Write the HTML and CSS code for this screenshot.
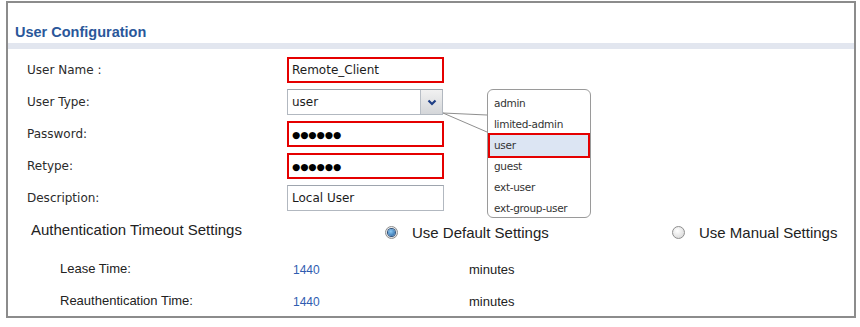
FILE: index.html
```html
<!DOCTYPE html>
<html lang="en">
<head>
    <meta charset="UTF-8">
    <title>User Configuration</title>
    <link rel="stylesheet" href="styles.css">
</head>
<body>

<div class="panel">
    <div class="title">User Configuration</div>
    <div class="band"></div>

    <div class="form">
        <div class="row">
            <div class="label">User Name :</div>
            <div class="field marked">Remote_Client</div>
        </div>

        <div class="row">
            <div class="label">User Type:</div>
            <div class="select-wrap">
                <div class="field select">
                    <span>user</span>
                    <span class="arrow">
                        <svg width="10" height="7" viewBox="0 0 10 7">
                            <polyline points="1.5,1.5 5,5 8.5,1.5" fill="none" stroke="#1f3f86" stroke-width="2.2"/>
                        </svg>
                    </span>
                </div>
                <svg class="pointer" width="48" height="24" viewBox="0 0 48 24">
                    <polyline points="45,3 1,1 45,20" fill="none" stroke="#8f8f8f" stroke-width="1"/>
                </svg>
                <ul class="menu">
                    <li>admin</li>
                    <li>limited-admin</li>
                    <li class="picked">user</li>
                    <li>guest</li>
                    <li>ext-user</li>
                    <li>ext-group-user</li>
                </ul>
            </div>
        </div>

        <div class="row">
            <div class="label">Password:</div>
            <div class="field marked dots">●●●●●●</div>
        </div>

        <div class="row">
            <div class="label">Retype:</div>
            <div class="field marked dots">●●●●●●</div>
        </div>

        <div class="row">
            <div class="label">Description:</div>
            <div class="field">Local User</div>
        </div>
    </div>

    <div class="auth">
        <div class="auth-label">Authentication Timeout Settings</div>
        <div class="choice first">
            <span class="radio on"></span>
            <span>Use Default Settings</span>
        </div>
        <div class="choice">
            <span class="radio"></span>
            <span>Use Manual Settings</span>
        </div>
    </div>

    <div class="times">
        <div class="time-row">
            <div class="time-label">Lease Time:</div>
            <div class="time-value">1440</div>
            <div class="time-unit">minutes</div>
        </div>
        <div class="time-row">
            <div class="time-label">Reauthentication Time:</div>
            <div class="time-value">1440</div>
            <div class="time-unit">minutes</div>
        </div>
    </div>
</div>

</body>
</html>
```

FILE: styles.css
```css
body {
    margin: 0;
    background-color: #fff;
    font-family: "DejaVu Sans", sans-serif;
    color: #2b2b2b;
}
.panel {
    box-sizing: border-box;
    width: 850px;
    height: 317px;
    margin: 1px 0 0 6px;
    border: 2px solid #8c8c8c;
}
.title {
    box-sizing: border-box;
    height: 40px;
    padding: 21px 0 0 7px;
    font-family: "Liberation Sans", Arial, sans-serif;
    font-size: 14.5px;
    line-height: 17px;
    font-weight: bold;
    color: #2a579a;
}
.band {
    height: 6px;
    background-color: #e2e6ef;
}
.form {
    margin-top: 8px;
}
.row {
    display: flex;
    align-items: center;
    height: 26px;
    margin-bottom: 6px;
}
.label {
    box-sizing: border-box;
    width: 279px;
    padding-left: 19px;
    font-size: 12px;
}
.field {
    box-sizing: border-box;
    display: flex;
    align-items: center;
    width: 157px;
    height: 26px;
    padding-left: 4px;
    border: 1px solid #b2b8c0;
    border-top-color: #9ea5ae;
    font-size: 12px;
    color: #1c1c1c;
    background-color: #fff;
}
.field.marked {
    border: 2px solid #e50000;
    padding-left: 3px;
}
.field.dots {
    font-size: 9.4px;
    letter-spacing: 0;
    color: #000;
}
.select-wrap {
    position: relative;
}
.field.select {
    width: 156px;
    padding-right: 0;
    justify-content: space-between;
}
.arrow {
    display: flex;
    align-items: center;
    justify-content: center;
    width: 21px;
    height: 24px;
    border-left: 1px solid #b8bec6;
    background: linear-gradient(#f1f1f1, #d4d6d9);
}
.pointer {
    position: absolute;
    left: 155px;
    top: 23px;
}
.menu {
    position: absolute;
    left: 200px;
    top: 0;
    width: 104px;
    height: 129px;
    box-sizing: border-box;
    margin: 0;
    padding: 3px 0 0;
    list-style: none;
    border: 1px solid #9a9a9a;
    border-radius: 6px;
    background-color: #fff;
    font-size: 10.5px;
    color: #333;
}
.menu li {
    height: 21px;
    line-height: 21px;
    padding-left: 6px;
    letter-spacing: -0.3px;
}
.menu li.picked {
    margin: 0 2px;
    padding-left: 4px;
    background-color: #dce5f3;
    box-shadow: 0 0 0 2px #e50000;
}
.auth {
    display: flex;
    align-items: center;
    height: 24px;
    font-family: "Liberation Sans", Arial, sans-serif;
    font-size: 15px;
    color: #222;
}
.auth-label {
    box-sizing: border-box;
    width: 377px;
    padding-left: 23px;
}
.choice {
    display: flex;
    align-items: center;
    padding-top: 7px;
}
.choice.first {
    width: 287px;
}
.choice .radio {
    margin-right: 14px;
}
.radio {
    box-sizing: border-box;
    width: 13px;
    height: 13px;
    border-radius: 50%;
    border: 1px solid #8e8e8e;
    background: radial-gradient(circle at 40% 35%, #ffffff, #d2d2d2);
    display: flex;
    align-items: center;
    justify-content: center;
}
.radio.on::after {
    content: "";
    width: 7px;
    height: 7px;
    border-radius: 50%;
    background: radial-gradient(circle at 40% 35%, #8ccaf4, #1c5a9c);
    box-shadow: 0 0 0 1px #2d4f78;
}
.times {
    margin-top: 17px;
    font-family: "Liberation Sans", Arial, sans-serif;
    font-size: 13px;
    color: #222;
}
.time-row {
    display: flex;
    align-items: center;
    height: 20px;
    margin-bottom: 12px;
}
.time-label {
    box-sizing: border-box;
    width: 285px;
    padding-left: 52px;
}
.time-value {
    width: 176px;
    padding-top: 4px;
    font-size: 12px;
    color: #2f5cb0;
}
.time-unit {
    padding-top: 3px;
}
```
